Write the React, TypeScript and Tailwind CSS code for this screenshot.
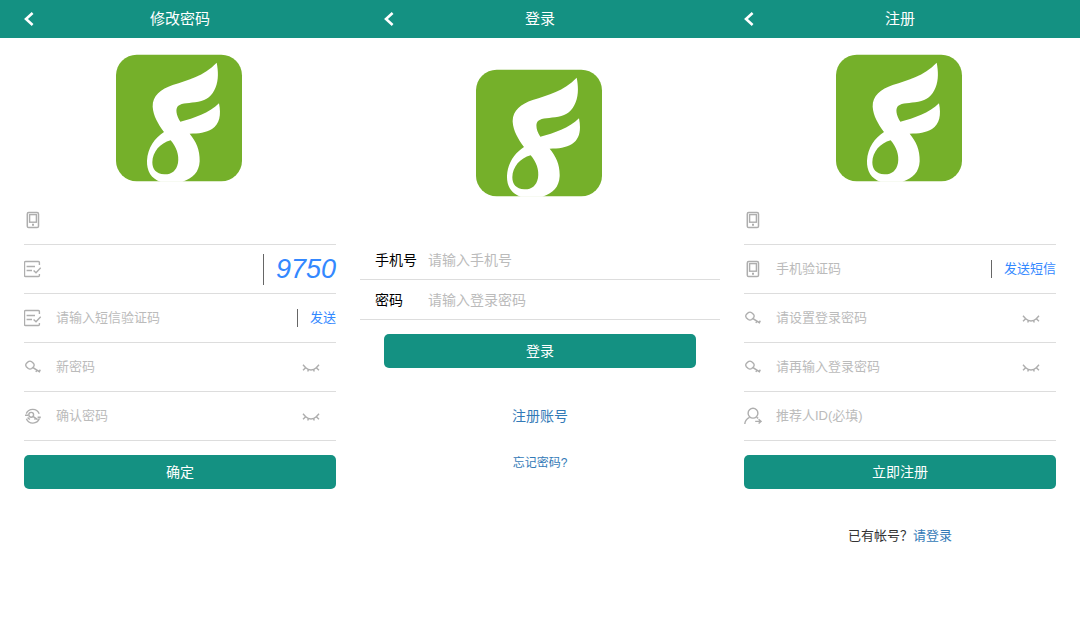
import { ReactNode } from "react"
import clsx from "clsx"

type IconName = "phone" | "code" | "key" | "confirm" | "user"

const iconPaths: Record<IconName, ReactNode> = {
  phone: (
    <>
      <rect x="3.3" y="1.6" width="11.2" height="15" rx="1.4" strokeWidth="1.5" />
      <rect x="5.6" y="3.6" width="6.8" height="7.6" />
      <path d="M8 13.8h2" strokeWidth="2" />
    </>
  ),
  code: (
    <>
      <path d="M15.4 5V2.500a1 1 0 0 0-1-1H1.500a1 1 0 0 0-1 1v13a1 1 0 0 0 1 1h12.900a1 1 0 0 0 1-1v-1.500" />
      <path d="M2.600 6.500H11M2.600 10.500H8" strokeWidth="1.600" />
      <path d="M9.600 10.600l2.400 2.200 4.700-5" />
    </>
  ),
  key: (
    <>
      <path d="M4.200 3.700Q6 2.500 7.700 3.700L9.600 5.400Q10.900 7.100 9.600 8.800L7.700 10.500Q6 11.700 4.300 10.500L2.300 8.800Q1 7.100 2.300 5.400Z" />
      <path d="M9 9.600l7 4.600" strokeWidth="1.600" />
      <path d="M12.800 12.400l-.9 1.600M14.800 13.800l1.600-2" />
    </>
  ),
  confirm: (
    <>
      <path d="M2.300 6.600A7 7 0 0 1 15.200 6.800M15.400 11.600A7 7 0 0 1 2.400 11.800" />
      <path d="M1 8.200h3.200M13.600 10.400h3.200" strokeWidth="1.600" />
      <circle cx="7.200" cy="7.800" r="2.400" />
      <path d="M9 9.400l4.600 3.200M11.400 11.200l-.8 1.400M3.600 10.400l2.200 2.200" />
    </>
  ),
  user: (
    <>
      <circle cx="9" cy="6.200" r="4.900" />
      <path d="M.8 17c.2-3 1.800-5.200 4.800-6.600M12.600 10.200l1.600 1.200" />
      <path d="M11.200 14.400h5.600M14.600 12.200l2.400 2.200-2.400 2.200" />
    </>
  ),
}

function FieldIcon({ name }: { name: IconName }) {
  return (
    <svg
      viewBox="0 0 18 18"
      className="h-[18px] w-[18px] shrink-0"
      fill="none"
      stroke="#aeaeae"
      strokeWidth="1.4"
      aria-hidden="true"
    >
      {iconPaths[name]}
    </svg>
  )
}

function ClosedEye() {
  return (
    <svg viewBox="0 0 18 18" className="h-[18px] w-[18px]" fill="none" stroke="#aeaeae" strokeWidth="1.4" aria-hidden="true">
      <path d="M1 12.300L3.700 9.800Q6 12 9 12T14.300 9.800L17 12.300" />
      <path d="M1 6.700l2.700 3.100M17 6.700l-2.700 3.100M6.500 11.400l-.8 2.200M11.500 11.400l.8 2.200" />
    </svg>
  )
}

function Logo() {
  return (
    <svg viewBox="0 0 384 384" className="mx-auto block h-32 w-32 shrink-0" role="img" aria-label="Logo">
      <rect y="2" width="378" height="380" rx="62" fill="#75b02a" />
      <path
        fill="#fff"
        d="M302 26C307 50 308 78 299 100C289 126 272 139 247 143C221 148 199 145 186 156C178 164 180 183 193 203C235 193 279 177 309 148C316 183 311 211 288 225C270 236 248 239 221 239C240 262 252 287 251 322C249 355 231 373 199 383H134C105 374 92 350 93 320C95 282 116 252 144 234C126 209 112 186 110 158C109 125 135 105 170 93C218 77 262 67 302 26Z"
      />
      <path
        fill="#75b02a"
        d="M164 259C181 279 190 303 186 327C181 352 165 362 145 361C120 360 109 345 109 325C110 293 132 268 164 259Z"
      />
    </svg>
  )
}

function Screen({ title, children }: { title: string; children: ReactNode }) {
  return (
    <section className="min-w-0">
      <header className="grid h-[38px] grid-cols-[48px_1fr_48px] items-center bg-[#149182] text-white">
        <button type="button" aria-label="返回" className="flex h-full items-center pl-5">
          <svg viewBox="0 0 18 18" className="h-[18px] w-[18px]" fill="none" stroke="currentColor" strokeWidth="2.6" aria-hidden="true">
            <path d="M12.600 3L6 9l6.600 6" />
          </svg>
        </button>
        <h1 className="text-center text-[15px]">{title}</h1>
      </header>
      {children}
    </section>
  )
}

interface FieldProps {
  icon: IconName
  label: string
  placeholder?: string
  type?: string
  children?: ReactNode
}

function Field({ icon, label, placeholder, type = "text", children }: FieldProps) {
  return (
    <div className="flex h-[49px] items-center border-b border-[#dddddd]">
      <FieldIcon name={icon} />
      <input
        type={type}
        aria-label={label}
        placeholder={placeholder}
        className="ml-3.5 min-w-0 flex-1 text-[13px] outline-none placeholder:text-[#bbbbbb]"
      />
      {children}
    </div>
  )
}

function PasswordField(props: FieldProps) {
  return (
    <Field {...props} type="password">
      <button type="button" aria-label="显示密码" className="mr-4">
        <ClosedEye />
      </button>
    </Field>
  )
}

function SendButton({ children }: { children: ReactNode }) {
  return (
    <button type="button" className="shrink-0 border-l border-[#666666] pl-3 text-[13px] leading-[18px] text-[#3388ff]">
      {children}
    </button>
  )
}

function LoginField({ id, label, placeholder, type }: { id: string; label: string; placeholder: string; type: string }) {
  return (
    <div className="flex h-10 items-center border-b border-[#dddddd] px-[15px] text-sm">
      <label htmlFor={id} className="w-[53px] shrink-0 text-black">
        {label}
      </label>
      <input id={id} type={type} placeholder={placeholder} className="min-w-0 flex-1 outline-none placeholder:text-[#bbbbbb]" />
    </div>
  )
}

function SubmitButton({ children, className }: { children: ReactNode; className?: string }) {
  return (
    <button type="submit" className={clsx("mt-3.5 h-[34px] rounded-[5px] bg-[#149182] text-sm text-white", className)}>
      {children}
    </button>
  )
}

function ChangePassword() {
  return (
    <Screen title="修改密码">
      <form className="flex flex-col px-6 pt-4" onSubmit={(e) => e.preventDefault()}>
        <Logo />
        <div className="mt-3.5">
          <Field icon="phone" label="手机号" type="tel" />
          <Field icon="code" label="图形验证码">
            <button
              type="button"
              aria-label="图形验证码 9750"
              className="shrink-0 border-l border-[#666666] pl-3 text-[27px] leading-[31px] text-[#3388ff] italic"
            >
              9750
            </button>
          </Field>
          <Field icon="code" label="短信验证码" placeholder="请输入短信验证码">
            <SendButton>发送</SendButton>
          </Field>
          <PasswordField icon="key" label="新密码" placeholder="新密码" />
          <PasswordField icon="confirm" label="确认密码" placeholder="确认密码" />
        </div>
        <SubmitButton>确定</SubmitButton>
      </form>
    </Screen>
  )
}

function Login() {
  return (
    <Screen title="登录">
      <form className="flex flex-col pt-[31px]" onSubmit={(e) => e.preventDefault()}>
        <Logo />
        <div className="mt-[43px]">
          <LoginField id="login-phone" label="手机号" placeholder="请输入手机号" type="tel" />
          <LoginField id="login-password" label="密码" placeholder="请输入登录密码" type="password" />
        </div>
        <SubmitButton className="mx-6">登录</SubmitButton>
      </form>
      <nav className="mt-[38px] flex flex-col items-center gap-7 text-[#337ab7]">
        <a href="#register" className="text-sm">
          注册账号
        </a>
        <a href="#forgot" className="text-xs leading-[18px]">
          忘记密码?
        </a>
      </nav>
    </Screen>
  )
}

function Register() {
  return (
    <Screen title="注册">
      <form className="flex flex-col px-6 pt-4" onSubmit={(e) => e.preventDefault()}>
        <Logo />
        <div className="mt-3.5">
          <Field icon="phone" label="手机号" type="tel" />
          <Field icon="phone" label="手机验证码" placeholder="手机验证码">
            <SendButton>发送短信</SendButton>
          </Field>
          <PasswordField icon="key" label="登录密码" placeholder="请设置登录密码" />
          <PasswordField icon="key" label="再次输入登录密码" placeholder="请再输入登录密码" />
          <Field icon="user" label="推荐人ID" placeholder="推荐人ID(必填)" />
        </div>
        <SubmitButton>立即注册</SubmitButton>
      </form>
      <p className="mt-[37px] text-center text-[13px] leading-5 text-[#333333]">
        已有帐号？
        <a href="#login" className="text-[#337ab7]">
          请登录
        </a>
      </p>
    </Screen>
  )
}

export default function App() {
  return (
    <main className="grid min-h-screen grid-cols-3 bg-white font-['Liberation_Sans','Noto_Sans_CJK_SC',sans-serif]">
      <ChangePassword />
      <Login />
      <Register />
    </main>
  )
}
